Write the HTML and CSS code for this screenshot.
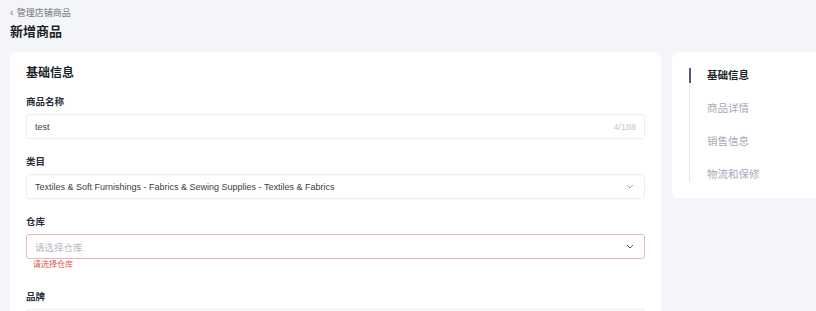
FILE: index.html
```html
<!DOCTYPE html>
<html lang="zh-CN">
<head>
    <meta charset="UTF-8">
    <title>新增商品</title>
    <link rel="stylesheet" href="styles.css">
</head>
<body>
    <div class="page-head">
        <a class="back-link" href="#"><span class="back-arrow">‹</span> 管理店铺商品</a>
        <h1>新增商品</h1>
    </div>

    <div class="layout">
        <div class="form-card">
            <h2>基础信息</h2>

            <div class="form-item">
                <label>商品名称</label>
                <div class="field">
                    <span class="value">test</span>
                    <span class="count">4/188</span>
                </div>
            </div>

            <div class="form-item">
                <label>类目</label>
                <div class="field">
                    <span class="value">Textiles &amp; Soft Furnishings - Fabrics &amp; Sewing Supplies - Textiles &amp; Fabrics</span>
                    <svg class="chevron" width="8" height="5" viewBox="0 0 8 5"><path d="M1 1l3 3 3-3" fill="none" stroke="currentColor" stroke-width="1"/></svg>
                </div>
            </div>

            <div class="form-item has-error">
                <label>仓库</label>
                <div class="field">
                    <span class="placeholder">请选择仓库</span>
                    <svg class="chevron" width="8" height="5" viewBox="0 0 8 5"><path d="M1 1l3 3 3-3" fill="none" stroke="currentColor" stroke-width="1"/></svg>
                </div>
                <div class="error-text">请选择仓库</div>
            </div>

            <div class="form-item">
                <label>品牌</label>
                <div class="field">
                    <span class="placeholder"></span>
                    <svg class="chevron" width="8" height="5" viewBox="0 0 8 5"><path d="M1 1l3 3 3-3" fill="none" stroke="currentColor" stroke-width="1"/></svg>
                </div>
            </div>
        </div>

        <div class="side-card">
            <ul class="anchor-list">
                <li class="active">基础信息</li>
                <li>商品详情</li>
                <li>销售信息</li>
                <li>物流和保修</li>
            </ul>
        </div>
    </div>
</body>
</html>
```

FILE: styles.css
```css
body {
    font-family: "Liberation Sans", "Noto Sans CJK SC", sans-serif;
    background-color: #f4f5f9;
    margin: 0;
    padding: 0 10px;
    overflow: hidden;
    color: #262833;
}
.page-head {
    padding-top: 7px;
    height: 45px;
}
.back-link {
    display: block;
    font-size: 9px;
    line-height: 12px;
    color: #70737f;
    text-decoration: none;
}
.back-arrow {
    font-size: 10px;
    margin-right: 1px;
}
h1 {
    font-family: "Noto Sans CJK SC", sans-serif;
    margin: 3px 0 0;
    font-size: 13px;
    line-height: 18px;
    font-weight: bold;
    color: #1d1f29;
}
.layout {
    display: flex;
    gap: 11px;
    align-items: flex-start;
}
.form-card {
    flex: 0 0 651px;
    background-color: #ffffff;
    border-radius: 6px;
    padding: 12px 16px 0;
    box-sizing: border-box;
    height: 280px;
}
h2 {
    font-family: "Noto Sans CJK SC", sans-serif;
    margin: 0 0 15px;
    font-size: 12px;
    line-height: 16px;
    font-weight: bold;
    color: #1d1f29;
}
.form-item {
    margin-bottom: 16px;
}
.form-item label {
    display: block;
    font-family: "Noto Sans CJK SC", sans-serif;
    font-size: 9.5px;
    line-height: 12px;
    font-weight: bold;
    color: #2b2d38;
    margin-bottom: 7px;
}
.field {
    display: flex;
    align-items: center;
    justify-content: space-between;
    height: 25px;
    box-sizing: border-box;
    border: 1px solid #eceef2;
    border-radius: 3px;
    padding: 0 8px;
    font-size: 9px;
}
.value {
    color: #3a3d48;
}
.count {
    color: #c3c6cf;
    font-size: 9px;
}
.placeholder {
    font-family: "Noto Sans CJK SC", sans-serif;
    font-size: 9.5px;
    color: #b6b9c3;
}
.chevron {
    color: #a3a6b0;
    margin-right: 2px;
}
.has-error {
    margin-bottom: 21px;
}
.has-error .field {
    border-color: #f2b3b3;
}
.has-error .chevron {
    color: #5a5d68;
}
.error-text {
    font-family: "Noto Sans CJK SC", sans-serif;
    font-size: 8px;
    line-height: 10px;
    color: #e0554f;
    padding-left: 7px;
}
.side-card {
    flex: 0 0 160px;
    background-color: #ffffff;
    border-radius: 6px;
    padding: 6px 0 8px 17px;
    box-sizing: border-box;
}
.anchor-list {
    list-style: none;
    margin: 0;
    padding: 0;
    position: relative;
}
.anchor-list::before {
    content: "";
    position: absolute;
    left: 0;
    top: 10px;
    bottom: 8px;
    width: 1px;
    background-color: #e6e7ec;
}
.anchor-list li {
    position: relative;
    height: 33px;
    line-height: 33px;
    padding-left: 18px;
    font-family: "Noto Sans CJK SC", sans-serif;
    font-size: 10.5px;
    color: #a6a9b6;
}
.anchor-list li.active {
    color: #1d1f29;
    font-weight: bold;
}
.anchor-list li.active::before {
    content: "";
    position: absolute;
    left: 0;
    top: 10px;
    width: 2px;
    height: 15px;
    background-color: #555a82;
}
```
